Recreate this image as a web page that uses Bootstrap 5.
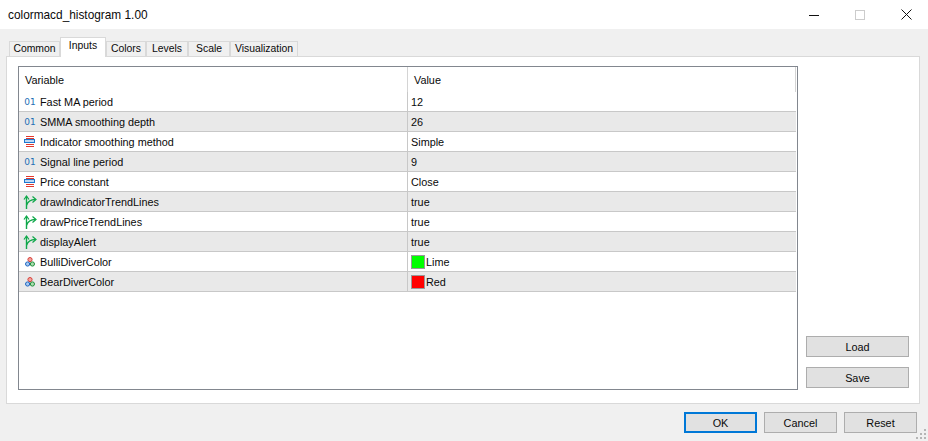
<!DOCTYPE html>
<html><head><meta charset="utf-8">
<link href="https://cdn.jsdelivr.net/npm/bootstrap@5.3.0/dist/css/bootstrap.min.css" rel="stylesheet">
<style>
html,body{width:928px;height:441px;overflow:hidden;background:#f0f0f0;}
body{font-family:"Liberation Sans",sans-serif;font-size:10.85px;color:#0a0a0a;position:relative;line-height:14px;}
.titlebar{height:29px;background:#fff;padding-left:8px;font-size:11.85px;}
.wctl{width:46px;height:29px;}
.winctls{margin-right:-1px;}
.tabrow{height:27px;padding:8px 0 0 9px;}
.tabrow .nav-link{border:1px solid #d9d9d9;border-bottom:0;border-radius:0;background:#f0f0f0;color:#0a0a0a;padding:0;height:15px;margin-top:4px;margin-bottom:0;text-align:center;font-size:10.4px;line-height:13px;}
.tabrow .nav-link.active{background:#fff;color:#0a0a0a;height:20px;margin-top:0;padding-top:1px;position:relative;z-index:2;border-color:#d9d9d9;margin-bottom:-1px;line-height:14px;}
.sheet{margin:0 8px 0 6px;height:348px;background:#fff;border:1px solid #d9d9d9;padding:9px 10px 15px 11px;gap:8px;}
.grid-box{width:780px;height:324px;border:1px solid #82878f;}
.grid-head{height:25px;align-items:center;}
.c-var{width:388px;flex:none;}
.c-val{flex:1;}
.grid-head .c-var{padding-left:6px;}
.grid-head .c-val{padding-left:6px;height:25px;border-left:1px solid #d4d4d4;line-height:27px;}
.grid-head-end{width:1px;height:25px;background:#d4d4d4;margin-right:1px;}
.prow{height:20px;border-bottom:1px solid #c8c8c8;align-items:center;margin-right:1px;}
.prow.odd{background:#e9e9e9;}
.prow .c-var{display:flex;align-items:center;height:19px;}
.prow .c-val{padding-left:3px;height:19px;line-height:20px;border-left:1px solid #c8c8c8;display:flex;align-items:center;}
.ico{width:21px;height:13px;flex:none;display:flex;justify-content:center;align-items:center;}
.ico svg{flex:none;}
.ico-num{font-family:"DejaVu Sans",sans-serif;font-size:9px;color:#1f6fb5;padding-left:1px;}
.swatch{width:14px;height:14px;border:1px solid #999;margin-right:1px;flex:none;}
.sw-lime{background:#0f0;}
.sw-red{background:#f00;}
.sidecol{width:103px;gap:10px;}
.btn.wbtn{--bs-btn-border-radius:0;background:#e1e1e1;border:1px solid #adadad;color:#0a0a0a;font-size:10.85px;line-height:14px;padding:0;height:21px;}
.sidecol .btn.wbtn{width:103px;}
.foot{height:37px;padding:8px 11px 0 0;gap:7px;}
.foot .btn.wbtn{width:73px;}
.btn.wbtn.deflt{border:2px solid #0078d7;}
.grip{position:absolute;right:1px;bottom:1px;}
</style></head>
<body>
<div class="titlebar d-flex align-items-center justify-content-between">
  <span>colormacd_histogram 1.00</span>
  <div class="d-flex winctls">
    <div class="wctl d-flex align-items-center justify-content-center"><svg width="10" height="10"><path d="M0 5.5H10" stroke="#111"/></svg></div>
    <div class="wctl d-flex align-items-center justify-content-center"><svg width="10" height="10"><rect x=".5" y=".5" width="9" height="9" fill="none" stroke="#ccc"/></svg></div>
    <div class="wctl d-flex align-items-center justify-content-center"><svg width="11" height="11"><path d="M.5 .5L10.5 10.5M10.5 .5L.5 10.5" stroke="#111"/></svg></div>
  </div>
</div>
<ul class="nav tabrow">
  <li class="nav-item"><a class="nav-link" style="width:51px">Common</a></li>
  <li class="nav-item"><a class="nav-link active" style="width:46px">Inputs</a></li>
  <li class="nav-item"><a class="nav-link" style="width:40px">Colors</a></li>
  <li class="nav-item"><a class="nav-link" style="width:42px">Levels</a></li>
  <li class="nav-item"><a class="nav-link" style="width:42px">Scale</a></li>
  <li class="nav-item"><a class="nav-link" style="width:68px">Visualization</a></li>
</ul>
<svg width="0" height="0" class="position-absolute">
  <defs>
    <symbol id="i-enum" viewBox="0 0 13 13"><path d="M3 1.5H11M3 3.5H11M3 9.5H11M3 11.5H11" stroke="#e0392f" fill="none"/><rect x="1.5" y="4.5" width="10" height="3" fill="#bcd8f2" stroke="#1f78d0"/></symbol>
    <symbol id="i-bool" viewBox="0 0 15 15"><path d="M4.5 15V2.5M4.5 11.5C5.5 8 8 5.5 13.5 5.5" stroke="#0fa84a" stroke-width="1.4" fill="none"/><path d="M2 5.5L4.5 2L7 5.5M10.5 2.5L14 5.5L10.5 8.5" stroke="#0fa84a" stroke-width="1.2" fill="none"/></symbol>
    <symbol id="i-color" viewBox="0 0 10 10"><circle cx="5" cy="2.6" r="2.1" fill="#f3a39c" stroke="#d8403a"/><circle cx="2.6" cy="7" r="2.1" fill="#a6c8ef" stroke="#1f66c0"/><circle cx="7.4" cy="7" r="2.1" fill="#a8dcae" stroke="#1f8f3a"/></symbol>
  </defs>
</svg>
<div class="sheet d-flex justify-content-between">
  <div class="grid-box flex-shrink-0">
    <div class="grid-head d-flex"><div class="c-var">Variable</div><div class="c-val">Value</div><div class="grid-head-end"></div></div>
    <div class="prow d-flex"><div class="c-var"><span class="ico ico-num">01</span>Fast MA period</div><div class="c-val">12</div></div>
    <div class="prow d-flex odd"><div class="c-var"><span class="ico ico-num">01</span>SMMA smoothing depth</div><div class="c-val">26</div></div>
    <div class="prow d-flex"><div class="c-var"><span class="ico"><svg width="13" height="13"><use href="#i-enum"/></svg></span>Indicator smoothing method</div><div class="c-val">Simple</div></div>
    <div class="prow d-flex odd"><div class="c-var"><span class="ico ico-num">01</span>Signal line period</div><div class="c-val">9</div></div>
    <div class="prow d-flex"><div class="c-var"><span class="ico"><svg width="13" height="13"><use href="#i-enum"/></svg></span>Price constant</div><div class="c-val">Close</div></div>
    <div class="prow d-flex odd"><div class="c-var"><span class="ico"><svg width="15" height="15"><use href="#i-bool"/></svg></span>drawIndicatorTrendLines</div><div class="c-val">true</div></div>
    <div class="prow d-flex"><div class="c-var"><span class="ico"><svg width="15" height="15"><use href="#i-bool"/></svg></span>drawPriceTrendLines</div><div class="c-val">true</div></div>
    <div class="prow d-flex odd"><div class="c-var"><span class="ico"><svg width="15" height="15"><use href="#i-bool"/></svg></span>displayAlert</div><div class="c-val">true</div></div>
    <div class="prow d-flex"><div class="c-var"><span class="ico"><svg width="10" height="10"><use href="#i-color"/></svg></span>BulliDiverColor</div><div class="c-val"><span class="swatch sw-lime"></span>Lime</div></div>
    <div class="prow d-flex odd"><div class="c-var"><span class="ico"><svg width="10" height="10"><use href="#i-color"/></svg></span>BearDiverColor</div><div class="c-val"><span class="swatch sw-red"></span>Red</div></div>
  </div>
  <div class="sidecol d-flex flex-column justify-content-end">
    <button class="btn wbtn">Load</button>
    <button class="btn wbtn">Save</button>
  </div>
</div>
<div class="foot d-flex justify-content-end">
  <button class="btn wbtn deflt">OK</button>
  <button class="btn wbtn">Cancel</button>
  <button class="btn wbtn">Reset</button>
</div>
<svg class="grip" width="11" height="11"><g fill="#b5b5b5"><rect x="8" y="0" width="2" height="2"/><rect x="4" y="4" width="2" height="2"/><rect x="8" y="4" width="2" height="2"/><rect x="0" y="8" width="2" height="2"/><rect x="4" y="8" width="2" height="2"/><rect x="8" y="8" width="2" height="2"/></g></svg>
</body></html>
